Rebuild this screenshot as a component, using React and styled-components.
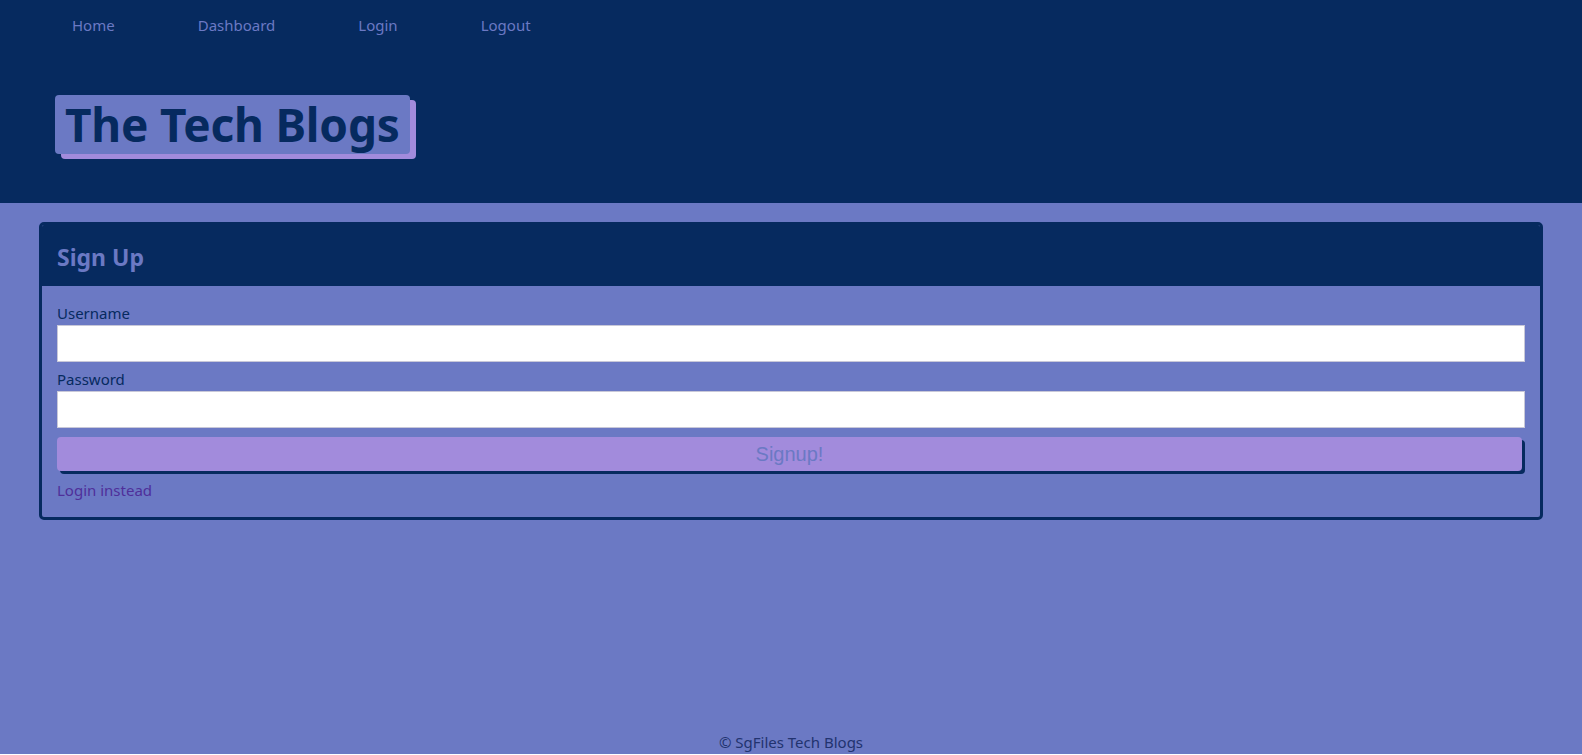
import React from "react";
import styled, { createGlobalStyle } from "styled-components";

const navy = "#062a5f";
const periwinkle = "#6b79c4";
const lilac = "#a28bdc";

const GlobalStyle = createGlobalStyle`
  html { background: #ffffff; }
  body {
    margin: 0;
    min-height: 754px;
    font-family: "Noto Sans", "Open Sans", sans-serif;
  }
  * { box-sizing: border-box; }
`;

const Page = styled.div`
  min-height: 754px;
  background: ${periwinkle};
  display: flex;
  flex-direction: column;
`;

const Header = styled.header`
  background: ${navy};
  height: 203px;
  padding: 13px 0 0 72px;
`;

const Nav = styled.nav`
  display: flex;
  gap: 83px;
`;

const NavLink = styled.a`
  color: ${periwinkle};
  font-size: 15px;
  line-height: 24px;
  text-decoration: none;
  cursor: pointer;
`;

const TitleWrap = styled.div`
  margin: 58px 0 0 -17px;
`;

const Title = styled.h1`
  display: inline-block;
  margin: 0;
  padding: 0 10px;
  height: 59px;
  line-height: 59px;
  background: ${periwinkle};
  color: ${navy};
  font-size: 46px;
  letter-spacing: -0.2px;
  font-weight: 700;
  border-radius: 4px;
  box-shadow: 6px 5px 0 ${lilac};
`;

const Main = styled.main`
  flex: 1;
  padding: 19px 39px 0;
`;

const Card = styled.section`
  border: 3px solid ${navy};
  border-radius: 5px;
  overflow: hidden;
`;

const CardHeader = styled.div`
  background: ${navy};
  height: 61px;
  padding: 0 15px;
  display: flex;
  align-items: center;
`;

const CardTitle = styled.h2`
  margin: 2px 0 0;
  color: ${periwinkle};
  font-size: 23px;
  font-weight: 700;
`;

const CardBody = styled.form`
  padding: 17px 15px 17px;
  display: flex;
  flex-direction: column;
`;

const Label = styled.label`
  color: ${navy};
  font-size: 15px;
  line-height: 20px;
  margin-bottom: 2px;
`;

const Input = styled.input`
  height: 37px;
  width: 100%;
  border: 1px solid #c8c8d8;
  background: #ffffff;
  margin-bottom: 7px;
  font-size: 16px;
  padding: 0 8px;
`;

const Button = styled.button`
  height: 34px;
  margin: 2px 3px 0 0;
  border: none;
  border-radius: 4px;
  background: ${lilac};
  color: ${periwinkle};
  font-family: "Liberation Sans", Arial, sans-serif;
  font-size: 20px;
  box-shadow: 3px 3px 0 ${navy};
  cursor: pointer;
`;

const SwitchLink = styled.a`
  margin-top: 9px;
  color: #4f2f9a;
  font-size: 15px;
  line-height: 20px;
  text-decoration: none;
  cursor: pointer;
`;

const Footer = styled.footer`
  text-align: center;
  color: #22336f;
  font-size: 15px;
  line-height: 24px;
`;

export default function App() {
  return (
    <>
      <GlobalStyle />
      <Page>
        <Header>
          <Nav>
            <NavLink>Home</NavLink>
            <NavLink>Dashboard</NavLink>
            <NavLink>Login</NavLink>
            <NavLink>Logout</NavLink>
          </Nav>
          <TitleWrap>
            <Title>The Tech Blogs</Title>
          </TitleWrap>
        </Header>
        <Main>
          <Card>
            <CardHeader>
              <CardTitle>Sign Up</CardTitle>
            </CardHeader>
            <CardBody onSubmit={(e) => e.preventDefault()}>
              <Label htmlFor="username">Username</Label>
              <Input id="username" type="text" />
              <Label htmlFor="password">Password</Label>
              <Input id="password" type="password" />
              <Button type="submit">Signup!</Button>
              <SwitchLink>Login instead</SwitchLink>
            </CardBody>
          </Card>
        </Main>
        <Footer>© SgFiles Tech Blogs</Footer>
      </Page>
    </>
  );
}
